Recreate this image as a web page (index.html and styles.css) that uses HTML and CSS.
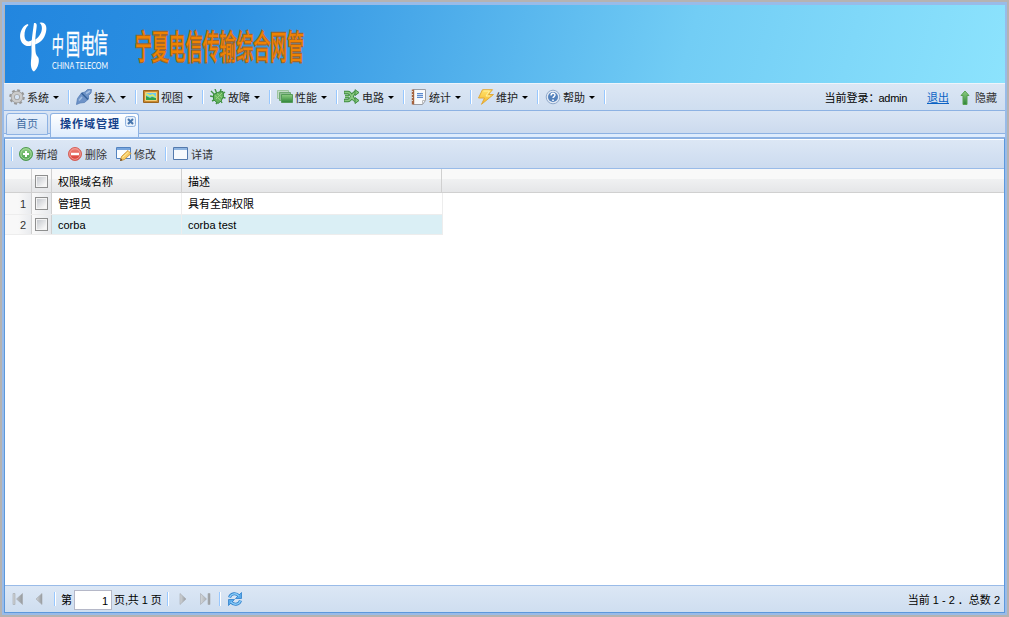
FILE: index.html
```html
<!DOCTYPE html>
<html lang="zh-CN">
<head>
<meta charset="utf-8">
<title>宁夏电信传输综合网管</title>
<link rel="stylesheet" href="styles.css">
</head>
<body>
<svg class="defs" width="0" height="0">
  <defs>
    <linearGradient id="green" x2="0" y2="1"><stop stop-color="#8fce83"/><stop offset="1" stop-color="#2e8538"/></linearGradient>
    <linearGradient id="greenplus" x2="0" y2="1"><stop stop-color="#8fce83"/><stop offset="1" stop-color="#4ba04c"/></linearGradient>
    <linearGradient id="red" x2="0" y2="1"><stop stop-color="#f08a80"/><stop offset="1" stop-color="#d8372f"/></linearGradient>
    <linearGradient id="grey" x2="1"><stop stop-color="#d2d6da"/><stop offset="1" stop-color="#969a9e"/></linearGradient>
    <linearGradient id="gold" x2="0" y2="1"><stop stop-color="#ffe36a"/><stop offset="1" stop-color="#f5b62c"/></linearGradient>
  </defs>
</svg>
<div class="window">
  <header class="banner">
    <svg width="320" height="78" viewBox="5 5 320 78">
      <g fill="#fff">
        <path d="M27.500 24C22 26 19.500 33 20.200 38C21 44 26 47.500 31.500 45.500L32 40C28 43 24.800 41 24.500 36C24.300 31 25.800 27.500 28.500 25Z"/>
        <path d="M34 23C36.500 22.500 37.200 24 36.500 28C35.300 36 35 42 35.300 48C35.500 53 36 55 38 57C40 60 38.500 68 34 71.500C31.500 70.500 30.500 66 31 61C31.500 57 31.700 53 31.500 48C31.300 40 32.700 33 33.300 28Z"/>
        <path d="M39.500 23C43.500 21.500 47 24.500 46.300 30C45.500 36.500 42 42.500 35 44.500L35.300 39.500C39.500 37 42 32 41.900 28C41.800 25.500 41.200 24 39.500 23Z"/>
      </g>
      <g class="brand-cn">
        <text transform="translate(51.500 53.500) scale(.5 1) skewX(-4)" font-size="24">中</text>
        <text transform="translate(66 55) scale(.5 1)" font-size="28">国</text>
        <text transform="translate(80.500 53.500) scale(.54 1) skewX(-4)" font-size="26">电</text>
        <text transform="translate(94 53) scale(.52 1)" font-size="27">信</text>
      </g>
      <text class="brand-en" x="52" y="69" textLength="56" lengthAdjust="spacingAndGlyphs">CHINA TELECOM</text>
      <text class="system-name" transform="translate(135 59) scale(.5 1)" textLength="338">宁夏电信传输综合网管</text>
    </svg>
  </header>

  <nav class="menubar">
    <div class="menu"><svg class="icon" viewBox="0 0 16 16"><circle cx="8" cy="8" r="6.700" fill="none" stroke="#979797" stroke-width="2.200" stroke-dasharray="2.800 2.460"/><circle cx="8" cy="8" r="4.200" fill="none" stroke="#999" stroke-width="4"/><circle cx="8" cy="8" r="4.200" fill="none" stroke="#cbcbcb" stroke-width="2.700"/></svg><span>系统</span><i class="caret"></i></div>
    <div class="menu"><svg class="icon" viewBox="0 0 16 16"><path d="M.5 15.500L1.500 9.500L5.500 4L9 3L11.500.5L15.500.5L15 4L12.500 6.500L12.500 10L8.500 13.500L4 14Z" fill="#6e93c8" stroke="#587fb6" stroke-width=".8"/><path d="M5.500 4L12 10.500" stroke="#38639c" stroke-width="1.600"/><path d="M3 11.500L6 8M10 4.500L14 2" stroke="#a3bee2" stroke-width="1.600"/></svg><span>接入</span><i class="caret"></i></div>
    <div class="menu"><svg class="icon" viewBox="0 0 16 16"><path d="M.5 1.500h15v12H.5z" fill="#c9892d" stroke="#9b651f"/><path d="M2.500 3.500h11v8h-11z" fill="#6bc7ee" stroke="#f1d07c"/><path d="M3 11V7l4 2 2-1 4 1v2z" fill="#2fa34a"/><path d="M3 4l4 2 3-1 3 3v1L9 7 7 8 3 6z" fill="#d4eb66"/></svg><span>视图</span><i class="caret"></i></div>
    <div class="menu"><svg class="icon" viewBox="0 0 16 16"><path d="M1 2l4 4M5 0l2 5M11 0l-1 4M0 7l5 1M2 12l4-2M6 15l2-3M12 14l-2-4M15.500 9l-4-1M15 3l-4 3" stroke="#439444" stroke-width="1.400" fill="none"/><path d="M3.500 5.500L9 3l4-.5.5 5-2.500 4.500-3 2.500-4.500-4z" fill="#64b45c" stroke="#38883c"/><path d="M5 6.500l6 5M7 4.500l5 4M6 10l6-6" stroke="#9ad485"/></svg><span>故障</span><i class="caret"></i></div>
    <div class="menu"><svg class="icon" viewBox="0 0 16 16"><path d="M.5 1.500h11v8H.5z" fill="#c4dcc7" stroke="#9dc5a0"/><path d="M2.500 3.500h11v8h-11z" fill="#91bd95" stroke="#70a974"/><path d="M4.500 5.500h11v8h-11z" fill="url(#green)" stroke="#559a59"/></svg><span>性能</span><i class="caret"></i></div>
    <div class="menu"><svg class="icon" viewBox="0 0 16 16"><path d="M0 3.500h4C8 3.500 7.500 11.500 12 11.500M1 7.500h4M0 11.500h4C8 11.500 7.500 3.500 12 3.500" fill="none" stroke="#3f8c41" stroke-width="3.400"/><path d="M.5 3.500H4C8 3.500 7.500 11.500 12 11.500M1 7.500h4M.5 11.500H4C8 11.500 7.500 3.500 12 3.500" fill="none" stroke="#8bc983" stroke-width="1.700"/><path d="M11 .7l4 2.800-4 3zM11 8.500l4 3-4 3z" fill="#83c47b" stroke="#3f8c41"/></svg><span>电路</span><i class="caret"></i></div>
    <div class="menu"><svg class="icon" viewBox="0 0 16 16"><path d="M2.500.5h12v11l-3 4h-9z" fill="#f8fafc" stroke="#9a9da5"/><path d="M.8.5h2.400v15H.8z" fill="#a5633f"/><path d="M0 2.500h2M0 5.500h2M0 8.500h2M0 11.500h2" stroke="#d9d6d2"/><path d="M6 4h6v5H6z" fill="#c9dcf5"/><path d="M6 4.500h6M6 6.500h6M6 8.500h6" stroke="#5d8acd"/><path d="M11.500 15v-3.500h3" fill="none" stroke="#bbb"/></svg><span>统计</span><i class="caret"></i></div>
    <div class="menu"><svg class="icon" viewBox="0 0 16 16"><path d="M4.500.7h10L10.500 5.500h5L3.500 15.300 6.500 9h-6z" fill="url(#gold)" stroke="#e0a93a"/><path d="M5.500 2h6L8 7h4" fill="none" stroke="#fff1a1"/></svg><span>维护</span><i class="caret"></i></div>
    <div class="menu"><svg class="icon" viewBox="0 0 16 16"><circle cx="8" cy="8" r="6.800" fill="#e3eaf4" stroke="#8fa9cb"/><circle cx="8" cy="8" r="5" fill="#5482bc"/><path d="M6 6.500c0-3 4-2.700 4-.4 0 1.500-2 1.500-2 3" fill="none" stroke="#fff" stroke-width="1.400"/><path d="M7.200 10.500h1.600v1.500H7.200z" fill="#fff"/></svg><span>帮助</span><i class="caret"></i></div>
    <div class="session">
      <span>当前登录：</span><span class="user">admin</span><a class="logout" href="#">退出</a>
      <svg class="icon" viewBox="0 0 16 16"><path d="M8 1l4 4.500h-2V14.500H6V5.500H4z" fill="url(#green)" stroke="#57a252"/></svg><span>隐藏</span>
    </div>
  </nav>

  <div class="tabs">
    <div class="tab">首页</div>
    <div class="tab active">操作域管理<svg class="close" viewBox="0 0 11 11"><rect x=".5" y=".5" width="10" height="10" rx="2" fill="#e6effa" stroke="#8fb2df"/><path d="M3 3l5 5M8 3L3 8" stroke="#4775ac" stroke-width="2"/></svg></div>
  </div>

  <main class="panel">
    <div class="toolbar">
      <i class="sep"></i>
      <button class="tool"><svg class="icon" viewBox="0 0 16 16"><circle cx="8" cy="8" r="6.500" fill="url(#greenplus)" stroke="#509b52"/><circle cx="8" cy="8" r="5.200" fill="none" stroke="#a5d99b"/><path d="M8 5v6M5 8h6" stroke="#fff" stroke-width="2"/></svg><span>新增</span></button>
      <button class="tool"><svg class="icon" viewBox="0 0 16 16"><circle cx="8" cy="8" r="6.500" fill="url(#red)" stroke="#d4625b"/><circle cx="8" cy="8" r="5.300" fill="none" stroke="#f1a09a"/><path d="M4 8h8" stroke="#fff" stroke-width="2.500"/></svg><span>删除</span></button>
      <button class="tool"><svg class="icon" viewBox="0 0 16 16"><path d="M.5 1.500h14v11H.5z" fill="#fbfdff" stroke="#5383c0"/><path d="M1 2h13v2H1z" fill="#77a6de"/><path d="M4.500 14.500l1-4 6.500-6 3 3-6.500 6z" fill="#f8cb63" stroke="#cc9136" stroke-width=".9"/><path d="M6.500 11.500l6-5.500" stroke="#fff0a5"/><path d="M4 15l.8-2.500 1.700 1.700z" fill="#63472c"/></svg><span>修改</span></button>
      <i class="sep detail-sep"></i>
      <button class="tool"><svg class="icon" viewBox="0 0 16 16"><path d="M.5 1.500h14v12H.5z" fill="#f6f9fd" stroke="#5379ad"/><path d="M1 2h13v2H1z" fill="#8eb5e2"/></svg><span>详请</span></button>
    </div>
    <div class="grid">
      <div class="grid-head">
        <div class="number"></div><div class="check"><i class="box"></i></div><div class="name">权限域名称</div><div class="desc">描述</div>
      </div>
      <div class="grid-row">
        <div class="number">1</div><div class="check"><i class="box"></i></div><div class="name">管理员</div><div class="desc">具有全部权限</div>
      </div>
      <div class="grid-row selected">
        <div class="number">2</div><div class="check"><i class="box"></i></div><div class="name">corba</div><div class="desc">corba test</div>
      </div>
    </div>
    <footer class="paging">
      <svg class="icon first" viewBox="0 0 16 16"><path d="M3 2.500h2v11H3zM12.500 2.500v11L6.500 8z" fill="url(#grey)" stroke="#a4a8ad" stroke-width=".6"/></svg>
      <svg class="icon prev" viewBox="0 0 16 16"><path d="M11 2.500v11L5 8z" fill="url(#grey)" stroke="#a4a8ad" stroke-width=".6"/></svg>
      <i class="sep"></i>
      <span class="page-label">第</span><input class="page-input" value="1"><span class="page-total">页,共 1 页</span>
      <i class="sep"></i>
      <svg class="icon next" viewBox="0 0 16 16"><path d="M5 2.500v11L11 8z" fill="url(#grey)" stroke="#a4a8ad" stroke-width=".6"/></svg>
      <svg class="icon last" viewBox="0 0 16 16"><path d="M3.500 2.500v11L9.500 8zM11 2.500h2v11h-2z" fill="url(#grey)" stroke="#a4a8ad" stroke-width=".6"/></svg>
      <i class="sep"></i>
      <svg class="icon refresh" viewBox="0 0 16 16"><path d="M2.500 6.500C4 1.800 9.500 1.800 12 5M13.500 9.500C12 14.200 6.500 14.200 4 11" fill="none" stroke="#2f80cc" stroke-width="3"/><path d="M14.500 1.500v6H8.500zM1.500 14.500v-6h6z" fill="#58a9ea" stroke="#2f80cc" stroke-width=".8"/><path d="M2.500 6.500C4 1.800 9.500 1.800 12 5M13.500 9.500C12 14.200 6.500 14.200 4 11" fill="none" stroke="#8accf8" stroke-width="1.300"/></svg>
      <span class="summary">当前 1 - 2 ．总数 2</span>
    </footer>
  </main>
</div>
</body>
</html>
```
FILE: styles.css
```css
* { box-sizing: border-box; }
html, body { height: 100%; }
body {
  margin: 0;
  padding: 2px;
  background: #b5b3b2;
  border-top: 1px solid #b5b3b2;
  padding-top: 1px;
  color: #222;
  font: 11px/14px "Liberation Sans", "Noto Sans CJK SC", sans-serif;
  overflow: hidden;
}
.defs { display: block; position: absolute; }
.icon { width: 16px; height: 16px; flex: none; display: block; }
.window {
  height: 613px;
  display: flex;
  flex-direction: column;
  border: 2px solid #99bbe8;
  border-top-width: 3px;
  white-space: nowrap;
}
.banner {
  height: 78px;
  flex: none;
  margin-left: 1px;
  background: linear-gradient(105deg, #2286df 0%, #2b8fe1 20%, #48a8e9 40%, #72cdf5 68%, #8ce3fd 100%);
}
.banner svg { display: block; }
.brand-cn { font-family: "Noto Sans CJK SC", sans-serif; font-weight: 400; fill: #fff; stroke: #fff; stroke-width: .4px; }
.brand-en { font: 9px Lato, sans-serif; fill: #fff; }
.system-name {
  font: 400 33.5px "Noto Sans CJK SC", sans-serif;
  fill: #f08200;
  stroke: #a4672a;
  stroke-width: 2.6px;
  paint-order: stroke;
}
.menubar {
  height: 28px;
  flex: none;
  display: flex;
  align-items: center;
  padding: 1px 0 0 5px;
  border-top: 1px solid #eef4fb;
  border-bottom: 1px solid #8db2e3;
  background: linear-gradient(#dbe6f4, #cfdef0);
}
.menu {
  width: 67px;
  height: 16px;
  flex: none;
  display: flex;
  align-items: center;
}
.menu > span { margin-left: 2px; padding-top: 1px; }
.menu .icon { margin-top: -1px; }
.menu::after, .sep {
  content: "";
  width: 2px;
  height: 14px;
  flex: none;
  background: linear-gradient(90deg, #98c8ff 50%, #fff 50%);
}
.menu::after { margin: -2px 0 0 9px; }
.caret {
  width: 6px;
  margin-left: 4px;
  border: 3px solid transparent;
  border-top-color: #000;
  border-bottom: 0;
}
.session { display: flex; align-items: center; margin-left: auto; padding-right: 8px; color: #000; }
.session > span:first-child { width: 54px; }
.user { letter-spacing: -.3px; }
.logout { color: #0a62c4; margin: 0 8px 0 20px; }
.session .icon + span { margin-left: 1px; color: #333; }
.session .icon { margin-right: 1px; }
.tabs {
  height: 27px;
  flex: none;
  display: flex;
  align-items: flex-start;
  gap: 2px;
  padding: 2px 2px 0;
  border-bottom: 1px solid #8db2e3;
  background: linear-gradient(#dae5f4, #ccdaee 22px, #8db2e3 22px, #8db2e3 23px, #deecfd 23px);
}
.tab {
  width: 42px;
  height: 22px;
  padding: 3px 9px 0;
  border: 1px solid #8db2e3;
  border-radius: 3px 3px 0 0;
  background: linear-gradient(#e8f1fc, #cfdff3);
  color: #416da3;
}
.tab.active {
  width: 89px;
  height: 24px;
  display: flex;
  padding: 3px 2px 0 9px;
  border-bottom: 0;
  background: linear-gradient(#fff, #deecfd);
  color: #15428b;
  font-weight: bold;
  letter-spacing: 1px;
}
.close { width: 11px; height: 11px; flex: none; margin: -1px 0 0 5px; }
.panel {
  flex: 1;
  min-height: 0;
  display: flex;
  flex-direction: column;
  border: 1px solid #5c98dc;
  border-top-color: #8db2e3;
  background: #fff;
}
.toolbar {
  height: 30px;
  flex: none;
  display: flex;
  align-items: center;
  padding: 1px 0 0 6px;
  border-top: 1px solid #fff;
  border-bottom: 1px solid #99bbe8;
  background: linear-gradient(#dce7f5, #ccdbef);
}
.tool {
  display: flex;
  align-items: center;
  gap: 2px;
  padding: 0;
  margin: -2px 9px 0 0;
  border: 0;
  background: none;
  color: #333;
  font: inherit;
}
.tool span { padding-top: 2px; }
.toolbar .sep { margin-top: -2px; }
.toolbar .sep:first-child { margin-right: 5px; }
.toolbar .detail-sep { margin-right: 6px; }
.grid { flex: 1; color: #000; }
.grid-head, .grid-row { display: flex; }
.grid-head {
  height: 24px;
  background: linear-gradient(#f9f9f9 10px, #f0f1f2 10px, #e5e6e8);
  border-bottom: 1px solid #d0d0d0;
}
.grid-head > div, .grid-row > div { display: flex; align-items: center; flex: none; }
.grid-head > .name, .grid-head > .desc { padding-top: 2px; }
.grid-head .box { margin-top: 1px; }
.number { width: 27px; justify-content: flex-end; padding-right: 5px; border-right: 1px solid #d0d0d0; }
.check { width: 20px; justify-content: center; border-right: 1px solid #d0d0d0; }
.name { width: 130px; padding-left: 6px; border-right: 1px solid #d0d0d0; }
.desc { width: 260px; padding-left: 6px; border-right: 1px solid #d0d0d0; }
.grid-row {
  width: 438px;
  height: 22px;
  border-right: 1px solid #ededed;
  border-bottom: 1px solid #ededed;
}
.grid-row + .grid-row { height: 20px; }
.grid-row .name { border-right-color: #ededed; }
.grid-row .desc { border-right: 0; }
.grid-row .number { color: #333; background: linear-gradient(90deg, #f8f8f8 50%, #e9ebee); }
.grid-row .check { background: linear-gradient(90deg, #fafafa, #e7e9ec); }
.selected { background: #daeff5; }
.box {
  width: 13px;
  height: 13px;
  border: 1px solid #8e8f8f;
  outline: 1px solid #f4f4f4;
  outline-offset: -2px;
  background: linear-gradient(135deg, #bfc3c9, #f6f6f6 80%);
}
.paging {
  height: 27px;
  flex: none;
  display: flex;
  align-items: center;
  padding: 0 4px 0 5px;
  border-top: 1px solid #99bbe8;
  background: linear-gradient(#dce7f5, #cfdef0);
  color: #000;
}
.paging > span { padding-top: 2px; }
.prev { margin: 0 7px 0 5px; }
.page-label { margin-left: 5px; }
.page-input {
  width: 38px;
  height: 20px;
  margin: 1px 2px 0 2px;
  padding: 2px 3px 0 2px;
  border: 1px solid #b5b8c8;
  background: #fff;
  color: #000;
  font: inherit;
  text-align: right;
}
.page-total { width: 53px; letter-spacing: -.1px; }
.next { margin: 0 6px 0 6px; }
.last { margin-right: 6px; }
.refresh { margin-left: 6px; }
.summary { margin-left: auto; }
```
